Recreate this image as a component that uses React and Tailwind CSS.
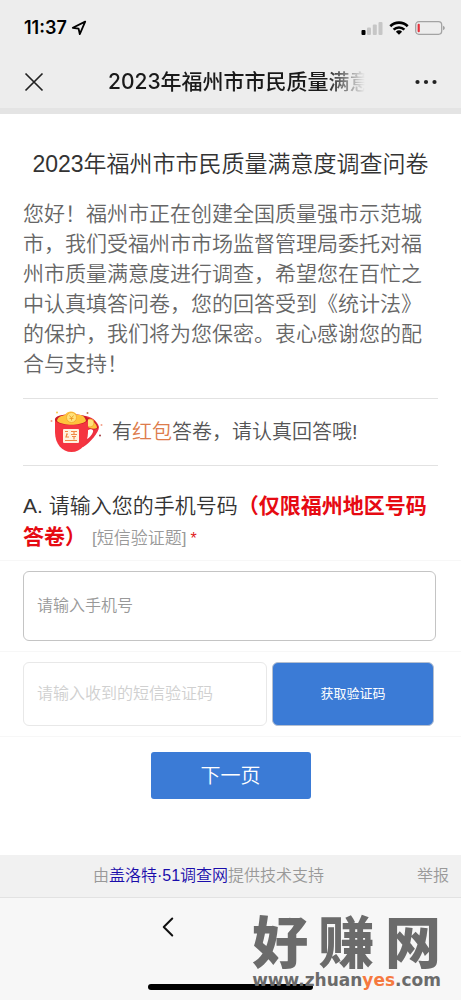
import { ChevronLeft, ChevronRight } from 'lucide-react';

const StatusBar = () => (
  <div className="flex h-14 items-center justify-between pl-6 pr-4">
    <div className="flex items-center gap-1 font-['Inter',sans-serif] text-lg font-semibold text-black">
      <span>11:37</span>
      <svg viewBox="0 0 16 16" className="size-4" fill="none" stroke="currentColor" strokeWidth="1.8" strokeLinejoin="round">
        <path d="M14.2 1.6 1.8 7.8 7.6 8.600 8.8 14.2Z" />
      </svg>
    </div>
    <div className="flex items-center gap-1.5">
      <svg viewBox="0 0 22 14" className="h-3.5 w-[22px]">
        <rect x="0.5" y="9" width="4" height="5" rx="1" fill="#000" />
        <rect x="6" y="6.5" width="4" height="7.5" rx="1" fill="#c6c6c6" />
        <rect x="11.8" y="3.5" width="4" height="10.5" rx="1" fill="#c6c6c6" />
        <rect x="17.5" y="1" width="4" height="13" rx="1" fill="#c6c6c6" />
      </svg>
      <svg viewBox="0 0 20 14" className="h-3.5 w-5" fill="none" stroke="#000" strokeWidth="2.6">
        <path d="M1.3 5.2a12.4 12.4 0 0 1 17.4 0" />
        <path d="M4.6 8.6a7.8 7.8 0 0 1 10.8 0" />
        <path d="M10 13.8 6.9 10.8a4.5 4.5 0 0 1 6.2 0Z" fill="#000" stroke="none" />
      </svg>
      <svg viewBox="0 0 30 14" className="h-3.5 w-[30px]">
        <rect x="0.7" y="0.7" width="26" height="12.6" rx="3.2" fill="none" stroke="#a3a3a3" strokeWidth="1.3" />
        <rect x="2.6" y="2.8" width="2.2" height="8.4" rx="1" fill="#e5303a" />
        <path d="M28.2 4.8v4.4q1.5-.8 1.5-2.2t-1.5-2.2Z" fill="#8f8f8f" />
      </svg>
    </div>
  </div>
);

const TitleBar = () => (
  <div className="flex h-13 items-center px-6">
    <button type="button" aria-label="关闭" className="w-[84px] shrink-0">
      <svg viewBox="0 0 20 20" className="size-5" stroke="#222" strokeWidth="1.7">
        <path d="M1.5 1.5 18.5 18.5M18.5 1.5 1.5 18.5" />
      </svg>
    </button>
    <div className="min-w-0 flex-1 overflow-hidden whitespace-nowrap bg-linear-to-r from-[#1a1a1a] from-85% to-transparent bg-clip-text font-['Inter','Noto_Sans_CJK_SC',sans-serif] text-[21px] font-medium text-transparent">
      2023年福州市市民质量满意度
    </div>
    <button type="button" aria-label="更多" className="flex w-[72px] shrink-0 justify-end">
      <svg viewBox="0 0 22 6" className="h-1.5 w-[22px]" fill="#222">
        <circle cx="2.5" cy="3" r="2.1" />
        <circle cx="11" cy="3" r="2.1" />
        <circle cx="19.5" cy="3" r="2.1" />
      </svg>
    </button>
  </div>
);

const CupIcon = () => (
  <svg viewBox="0 0 54 42" className="h-[42px] w-[54px]">
    <path d="M28 6C36 2 47 8 49 16c0 5-9 16-16 20l-3-5Z" fill="#ee3140" />
    <path d="M37 20c3-3 7-2 6 1-1 3-4 6-6 7Z" fill="#fff" />
    <path d="M32 8c6-4 16 2 16 9-3 3-9 1-13-3Z" fill="#c91a28" />
    <path d="M33 10c5-3 14 1 14 7-3 2-9 0-12-3Z" fill="#ffc33c" />
    <circle cx="40" cy="12" r="4" fill="#ffe27a" stroke="#f3a52c" strokeWidth=".8" />
    <path d="M5 9c0-7 33-7 33 0v12c0 12-7 20-16.500 20S5 33 5 21Z" fill="#f53540" />
    <ellipse cx="21.500" cy="8.500" rx="16.500" ry="5.500" fill="#c91a28" />
    <path d="M7 10c1-5 5-5 8-6 3-5 10-4 12 0 4-1 8 1 9 6-6 5-23 5-29 0Z" fill="#ffc33c" />
    <circle cx="21.500" cy="6.500" r="5" fill="#ffe27a" stroke="#f3a52c" strokeWidth=".8" />
    <path d="m19.500 4.500 2 2.500 2-2.500M21.500 7v2.500M19.500 7.500h4" fill="none" stroke="#e8921e" strokeWidth=".8" />
    <rect x="13" y="18" width="16" height="14" rx="1" fill="#fff3df" />
    <path d="M15 20.500h3M16 23h2m-1 0-1 3h3M21 20.500h6M24 20.500v3h-3m3 0h3m-5 2h4m-2 0v3M15 29.500h12" fill="none" stroke="#f08a45" strokeWidth="1.200" />
    <g fill="#f3a08a">
      <circle cx="1.500" cy="10" r="1" />
      <circle cx="7" cy="1.500" r="1" fill="#f7cc4c" />
      <circle cx="37.500" cy="2" r="1" fill="#b97952" />
      <circle cx="51.500" cy="14" r="1" />
      <circle cx="50" cy="24.500" r="1" fill="#a33e42" />
    </g>
  </svg>
);

const Watermark = () => (
  <div className="pointer-events-none absolute right-5 bottom-3 flex flex-col items-stretch text-[#6b6b6b]">
    <div className="flex justify-between text-[56px] leading-[56px] font-black">
      <span>好</span>
      <span>赚</span>
      <span>网</span>
    </div>
    <div className="font-['DejaVu_Sans',sans-serif] text-[17px] leading-4 font-bold">
      www.zhuan<span className="text-[#f5793f]">yes</span>.com
    </div>
  </div>
);

function App() {
  return (
    <div className="relative flex min-h-screen flex-col bg-white font-['Liberation_Sans','Noto_Sans_CJK_SC',sans-serif]">
      <header className="border-b-6 border-[#e4e4e4] bg-[#ededed]">
        <StatusBar />
        <TitleBar />
      </header>

      <main className="flex-1 pt-8">
        <div className="px-[23px]">
          <h1 className="text-center text-[23px] leading-9 font-[350] text-[#333]">2023年福州市市民质量满意度调查问卷</h1>
          <p className="mt-[17px] text-[21px] leading-[30px] font-[350] text-[#666]">
            您好！福州市正在创建全国质量强市示范城市，我们受福州市市场监督管理局委托对福州市质量满意度进行调查，希望您在百忙之中认真填答问卷，您的回答受到《统计法》的保护，我们将为您保密。衷心感谢您的配合与支持！
          </p>

          <div className="mt-[19px] flex h-[68px] items-center gap-2 border-y border-[#e2e2e2] pl-[27px] text-xl font-[350] text-[#555]">
            <CupIcon />
            <p>
              有<span className="text-[#dd7c4c]">红包</span>答卷，请认真回答哦!
            </p>
          </div>
        </div>

        <form className="font-[350]">
          <div className="px-[23px] pt-6 pb-1.5 text-[21px] leading-[31px] text-[#333]">
            <label htmlFor="phone">
              A. 请输入您的手机号码<strong className="font-bold text-[#e60a12]">（仅限福州地区号码答卷）</strong>
            </label>
            <span className="ml-1.5 text-[17px] text-[#999]">[短信验证题]</span>
            <span className="ml-1 text-base text-[#e02020]">*</span>
          </div>
          <div className="border-y border-[#f7f7f7] py-2.5 pl-[23px] pr-[25px]">
            <input
              id="phone"
              type="tel"
              placeholder="请输入手机号"
              className="block h-[70px] w-full rounded-md border border-[#c4c4c4] px-[13px] text-base placeholder:text-[#999]"
            />
          </div>
          <div className="flex gap-[5px] border-b border-[#f7f7f7] py-2.5 pl-[23px] pr-[27px]">
            <input
              type="text"
              aria-label="短信验证码"
              placeholder="请输入收到的短信验证码"
              className="h-16 min-w-0 flex-1 rounded-md border border-[#e8e8e8] px-[13px] text-base placeholder:text-[#d0d0d0]"
            />
            <button type="button" className="h-16 w-2/5 max-w-[162px] rounded-md border border-[#b4bfd0] bg-[#3b7bd6] text-[13px] font-normal text-white">
              获取验证码
            </button>
          </div>
          <div className="flex justify-center pt-[15px] pb-14">
            <button type="submit" className="h-[47px] w-40 rounded-[3px] bg-[#3b7bd6] text-xl text-white">
              下一页
            </button>
          </div>
        </form>
      </main>

      <footer className="relative border-b border-[#e2e2e2] bg-[#f1f1f1] py-[9px] text-center text-base font-[350] text-[#999]">
        <p className="pr-11">
          由<a href="#" className="text-[#1a0dab]">盖洛特·51调查网</a>提供技术支持
        </p>
        <a href="#" className="absolute top-[9px] right-3">举报</a>
      </footer>

      <nav className="flex h-[102px] flex-col items-center justify-between bg-[#f7f7f7] pt-3 pb-2.5">
        <div className="flex gap-[92px]">
          <button type="button" aria-label="后退">
            <ChevronLeft size={34} strokeWidth={1.4} color="#111" />
          </button>
          <button type="button" aria-label="前进" disabled>
            <ChevronRight size={34} strokeWidth={1.4} color="#bbb" />
          </button>
        </div>
        <div className="h-1.5 w-[165px] rounded-full bg-black" />
      </nav>

      <Watermark />
    </div>
  );
}

export default App;
